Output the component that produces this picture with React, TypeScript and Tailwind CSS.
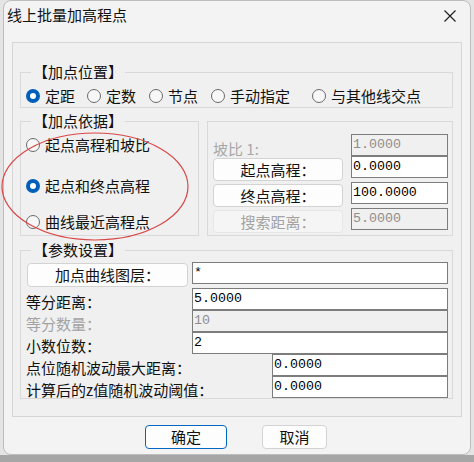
import React from "react";

const CJK = "font-['Noto_Sans_CJK_SC',sans-serif]";
const MONO = "font-['Liberation_Mono',monospace]";

function Radio({ checked }: { checked?: boolean }) {
  return checked ? (
    <span className="w-[14px] h-[14px] rounded-full bg-[#005fb8] flex items-center justify-center shrink-0">
      <span className="w-[6px] h-[6px] rounded-full bg-white" />
    </span>
  ) : (
    <span className="w-[14px] h-[14px] rounded-full border border-[#6b6b6b] bg-[#f7f7f7] shrink-0" />
  );
}

function RadioItem({ label, checked, cls = "" }: { label: string; checked?: boolean; cls?: string }) {
  return (
    <div className={`flex items-center h-[20px] gap-[5px] ${cls}`}>
      <Radio checked={checked} />
      <span className="text-[15px] leading-[20px] text-[#111] whitespace-nowrap">{label}</span>
    </div>
  );
}

function Input({ value, disabled, w }: { value: string; disabled?: boolean; w: string }) {
  return (
    <div
      className={`${w} h-[22px] shrink-0 border border-[#7d7d7d] ${
        disabled ? "bg-[#f0f0f0] text-[#8d8d8d]" : "bg-white text-black"
      } ${MONO} text-[13.3px] leading-[20px] pl-[1px] whitespace-nowrap overflow-hidden`}
    >
      {value}
    </div>
  );
}

function Btn({ label, disabled, cls = "" }: { label: string; disabled?: boolean; cls?: string }) {
  return (
    <div
      className={`flex items-center justify-center rounded-[4px] border text-[15px] leading-[20px] whitespace-nowrap ${
        disabled
          ? "bg-[#f5f5f5] border-[#e6e6e6] text-[#a3a3a3]"
          : "bg-[#fdfdfd] border-[#d3d3d3] text-[#111]"
      } ${cls}`}
    >
      {label}
    </div>
  );
}

function Legend({ text }: { text: string }) {
  return (
    <legend className="ml-[10px] px-[2px] text-[15px] leading-[20px] text-[#111] whitespace-nowrap">
      {text}
    </legend>
  );
}

export default function App() {
  return (
    <div className={`w-[474px] h-[462px] bg-[#e4e4e4] flex flex-col overflow-hidden relative ${CJK}`}>
      <div className="ml-[3px] w-[468px] h-[455px] shrink-0 rounded-[8px] bg-[#f3f3f3] border border-[#bdbdbd] flex flex-col">
        {/* title bar */}
        <div className="h-[41px] shrink-0 flex items-start justify-between pl-[3px] pr-[14px]">
          <span className="mt-[4px] text-[15px] leading-[20px] text-[#111]">线上批量加高程点</span>
          <svg className="mt-[9px]" width="12" height="12" viewBox="0 0 12 12">
            <path d="M0.5 0.5 L11.5 11.5 M11.5 0.5 L0.5 11.5" stroke="#1a1a1a" strokeWidth="1.1" fill="none" />
          </svg>
        </div>

        {/* inner frame */}
        <div className="ml-[8px] w-[450px] h-[375px] shrink-0 border border-[#d6d6d6] bg-[#f0f0f0] flex flex-col">
          {/* group 1 */}
          <fieldset className="ml-[7px] mt-[19px] w-[433px] border border-[#d9d9d9]">
            <Legend text="【加点位置】" />
            <div className="flex items-center mt-[4px] mb-[1px] ml-[5px]">
              <RadioItem label="定距" checked />
              <RadioItem label="定数" cls="ml-[12px]" />
              <RadioItem label="节点" cls="ml-[13px]" />
              <RadioItem label="手动指定" cls="ml-[13px]" />
              <RadioItem label="与其他线交点" cls="ml-[22px]" />
            </div>
          </fieldset>

          {/* group 2 row */}
          <div className="flex items-start ml-[7px] mt-[3px]">
            <fieldset className="w-[179px] border border-[#d9d9d9]">
              <Legend text="【加点依据】" />
              <div className="flex flex-col ml-[5px] pb-[3px]">
                <RadioItem label="起点高程和坡比" cls="mt-[4px]" />
                <RadioItem label="起点和终点高程" checked cls="mt-[21px]" />
                <RadioItem label="曲线最近高程点" cls="mt-[16px]" />
              </div>
            </fieldset>
            <div className="ml-[8px] mt-[10px] w-[246px] h-[115px] border border-[#d9d9d9] flex pl-[5px]">
              <div className="w-[130px] flex flex-col">
                <span className="mt-[18px] h-[18px] text-[15px] leading-[18px] text-[#a8a8a8] whitespace-nowrap">
                  坡比 1:
                </span>
                <Btn label="起点高程：" cls="h-[23px]" />
                <Btn label="终点高程：" cls="h-[23px] mt-[3px]" />
                <Btn label="搜索距离：" disabled cls="h-[23px] mt-[3px]" />
              </div>
              <div className="ml-[8px] flex flex-col">
                <div className="mt-[12px]">
                  <Input value="1.0000" disabled w="w-[97px]" />
                </div>
                <Input value="0.0000" w="w-[97px]" />
                <div className="mt-[4px]">
                  <Input value="100.0000" w="w-[97px]" />
                </div>
                <div className="mt-[4px]">
                  <Input value="5.0000" disabled w="w-[97px]" />
                </div>
              </div>
            </div>
          </div>

          {/* group 3 */}
          <fieldset className="ml-[7px] mt-[4px] w-[433px] border border-[#d9d9d9]">
            <Legend text="【参数设置】" />
            <div className="flex flex-col mt-[2px]">
              <div className="flex items-start h-[26px]">
                <Btn label="加点曲线图层：" cls="ml-[6px] mt-[1px] w-[161px] h-[24px]" />
                <div className="ml-[4px]">
                  <Input value="*" w="w-[256px]" />
                </div>
              </div>
              <div className="flex items-start h-[22px]">
                <span className="ml-[5px] w-[166px] mt-[4px] text-[15px] leading-[20px] text-[#111]">等分距离：</span>
                <Input value="5.0000" w="w-[256px]" />
              </div>
              <div className="flex items-start h-[22px]">
                <span className="ml-[5px] w-[166px] mt-[4px] text-[15px] leading-[20px] text-[#a3a3a3]">等分数量：</span>
                <Input value="10" disabled w="w-[256px]" />
              </div>
              <div className="flex items-start h-[22px]">
                <span className="ml-[5px] w-[166px] mt-[4px] text-[15px] leading-[20px] text-[#111]">小数位数：</span>
                <Input value="2" w="w-[256px]" />
              </div>
              <div className="flex items-start h-[22px]">
                <span className="ml-[5px] w-[246px] mt-[4px] text-[15px] leading-[20px] text-[#111] whitespace-nowrap">
                  点位随机波动最大距离：
                </span>
                <Input value="0.0000" w="w-[176px]" />
              </div>
              <div className="flex items-start h-[22px]">
                <span className="ml-[5px] w-[246px] mt-[4px] text-[15px] leading-[20px] text-[#111] whitespace-nowrap">
                  计算后的z值随机波动阈值：
                </span>
                <Input value="0.0000" w="w-[176px]" />
              </div>
            </div>
          </fieldset>
        </div>

        {/* buttons */}
        <div className="flex mt-[8px]">
          <div className="ml-[141px] w-[82px] h-[24px] rounded-[4px] border border-[#0067c0] bg-[#fdfdfd] flex items-center justify-center text-[15px] leading-[20px] text-[#111]">
            确定
          </div>
          <div className="ml-[35px] w-[65px] h-[24px] rounded-[4px] border border-[#d3d3d3] bg-[#fdfdfd] flex items-center justify-center text-[15px] leading-[20px] text-[#111]">
            取消
          </div>
        </div>
      </div>
      <div className="flex-1 bg-[#a6a6a6]" />

      {/* red annotation ellipse */}
      <svg className="absolute left-0 top-0 pointer-events-none" width="474" height="462">
        <ellipse cx="95" cy="186.5" rx="93" ry="53.5" fill="none" stroke="#d94848" strokeWidth="1.2" />
      </svg>
    </div>
  );
}
